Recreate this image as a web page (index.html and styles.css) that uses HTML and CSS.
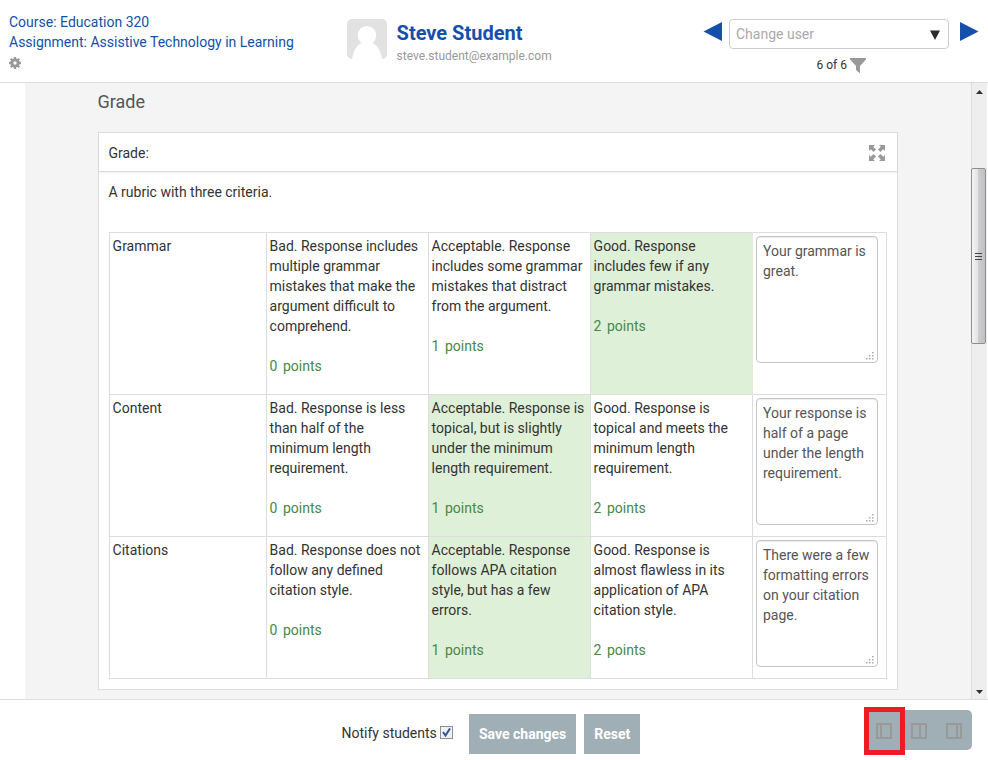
FILE: index.html
```html
<!DOCTYPE html>
<html lang="en">
<head>
<meta charset="utf-8">
<title>Education 320: Grading</title>
<link rel="stylesheet" href="styles.css">
</head>
<body>
<header class="topbar">
  <div class="course">
    <a>Course: Education 320</a>
    <a>Assignment: Assistive Technology in Learning</a>
    <svg class="gear" width="12" height="12" viewBox="0 0 12 12"><g fill="#999"><circle cx="6" cy="6" r="4.600"/><path d="M4.800 0h2.400v12H4.800zM0 4.800h12v2.400H0z"/><path d="M4.800 0h2.400v12H4.800zM0 4.800h12v2.400H0z" transform="rotate(45 6 6)"/></g><circle cx="6" cy="6" r="1.700" fill="#fff"/></svg>
  </div>
  <div class="student">
    <svg class="avatar" width="40" height="40" viewBox="0 0 40 40"><rect width="40" height="40" rx="5" fill="#e2e2e2"/><ellipse cx="20" cy="16.5" rx="9.2" ry="9.5" fill="#fff"/><path d="M5 40C6.500 30 11 25 15.500 24H24.500C29 25 33.500 30 35 40Z" fill="#fff"/></svg>
    <div>
      <h1 class="name">Steve Student</h1>
      <p class="email">steve.student@example.com</p>
    </div>
  </div>
  <nav class="picker">
    <div class="picker-row">
      <svg width="19" height="19" viewBox="0 0 19 19"><path d="M0.500 9.500L19 0V19Z" fill="#1450ab"/></svg>
      <div class="combo"><span>Change user</span><svg width="10" height="10" viewBox="0 0 10 10"><path d="M0 0.500H10L5 10Z" fill="#2b2b2b"/></svg></div>
      <svg width="19" height="19" viewBox="0 0 19 19"><path d="M18.500 9.500L0 0V19Z" fill="#1450ab"/></svg>
    </div>
    <div class="count"><span>6 of 6</span><svg width="16" height="16" viewBox="0 0 16 16"><path d="M0 0H16V1.500L10 8V15.500L6 12V8L0 1.500Z" fill="#999"/></svg></div>
  </nav>
</header>

<main class="body">
  <section class="pane">
    <h2 class="heading">Grade</h2>
    <div class="panel">
      <div class="panel-head"><span>Grade:</span>
        <svg width="16" height="16" viewBox="0 0 16 16" fill="#999"><g id="arrow"><path d="M0 0H6L4.200 1.800L7 4.600L4.600 7L1.800 4.200L0 6Z"/></g><use href="#arrow" transform="matrix(-1 0 0 1 16 0)"/><use href="#arrow" transform="matrix(1 0 0 -1 0 16)"/><use href="#arrow" transform="matrix(-1 0 0 -1 16 16)"/></svg>
      </div>
      <p class="intro">A rubric with three criteria.</p>
      <div class="rubric">
        <div class="row row-tall">
          <div class="cell">Grammar</div>
          <div class="cell">Bad. Response includes multiple grammar mistakes that make the argument difficult to comprehend.<p class="points">0 points</p></div>
          <div class="cell">Acceptable. Response includes some grammar mistakes that distract from the argument.<p class="points">1 points</p></div>
          <div class="cell checked">Good. Response includes few if any grammar mistakes.<p class="points">2 points</p></div>
          <div class="cell remark after-checked"><div class="note"><span>Your grammar is great.</span><svg class="grip" width="8" height="8" viewBox="0 0 8 8"><path d="M6 0h1.500v1.500H6zM3 3h1.500v1.500H3zM6 3h1.500v1.500H6zM0 6h1.500v1.500H0zM3 6h1.500v1.500H3zM6 6h1.500v1.500H6z"/></svg></div></div>
        </div>
        <div class="row">
          <div class="cell">Content</div>
          <div class="cell">Bad. Response is less than half of the minimum length requirement.<p class="points">0 points</p></div>
          <div class="cell checked">Acceptable. Response is topical, but is slightly under the minimum length requirement.<p class="points">1 points</p></div>
          <div class="cell">Good. Response is topical and meets the minimum length requirement.<p class="points">2 points</p></div>
          <div class="cell remark"><div class="note"><span>Your response is half of a page under the length requirement.</span><svg class="grip" width="8" height="8" viewBox="0 0 8 8"><path d="M6 0h1.500v1.500H6zM3 3h1.500v1.500H3zM6 3h1.500v1.500H6zM0 6h1.500v1.500H0zM3 6h1.500v1.500H3zM6 6h1.500v1.500H6z"/></svg></div></div>
        </div>
        <div class="row">
          <div class="cell">Citations</div>
          <div class="cell">Bad. Response does not follow any defined citation style.<p class="points">0 points</p></div>
          <div class="cell checked">Acceptable. Response follows APA citation style, but has a few errors.<p class="points">1 points</p></div>
          <div class="cell">Good. Response is almost flawless in its application of APA citation style.<p class="points">2 points</p></div>
          <div class="cell remark"><div class="note"><span>There were a few formatting errors on your citation page.</span><svg class="grip" width="8" height="8" viewBox="0 0 8 8"><path d="M6 0h1.500v1.500H6zM3 3h1.500v1.500H3zM6 3h1.500v1.500H6zM0 6h1.500v1.500H0zM3 6h1.500v1.500H3zM6 6h1.500v1.500H6z"/></svg></div></div>
        </div>
      </div>
    </div>
  </section>
  <div class="scrollbar">
    <svg class="up" width="7" height="4" viewBox="0 0 7 4"><path d="M0 4L3.500 0L7 4Z" fill="#333"/></svg>
    <div class="thumb"><i></i><i></i><i></i></div>
    <svg class="down" width="7" height="4" viewBox="0 0 7 4"><path d="M0 0H7L3.500 4Z" fill="#333"/></svg>
  </div>
</main>

<footer class="actions">
  <div class="save">
    <span class="notify">Notify students</span>
    <span class="check"><svg width="9" height="9" viewBox="0 0 9 9"><path d="M1 4L3.500 7.500L8 0.500" fill="none" stroke="#3d4f97" stroke-width="2"/></svg></span>
    <button class="btn">Save changes</button>
    <button class="btn">Reset</button>
  </div>
  <div class="layouts">
    <div class="layout current"><svg width="16" height="16" viewBox="0 0 16 16"><path d="M1 1H15V15H1ZM5 1V15"/></svg></div>
    <div class="layout"><svg width="16" height="16" viewBox="0 0 16 16"><path d="M1 1H15V15H1ZM9 1V15"/></svg></div>
    <div class="layout"><svg width="16" height="16" viewBox="0 0 16 16"><path d="M1 1H15V15H1ZM11 1V15"/></svg></div>
  </div>
</footer>
</body>
</html>
```
FILE: styles.css
```css
* { box-sizing: border-box; }
body {
  margin: 0;
  width: 988px;
  height: 760px;
  overflow: hidden;
  display: flex;
  flex-direction: column;
  background: #fff;
  color: #333;
  font: 14px/20px Roboto, "Liberation Sans", sans-serif;
}
h1, h2, p { margin: 0; }
svg { display: block; flex: none; }

.topbar {
  height: 83px;
  border-bottom: 1px solid #ddd;
  display: flex;
  flex: none;
}
.course {
  width: 347px;
  padding: 12px 0 0 9px;
  display: flex;
  flex-direction: column;
  color: #1450ab;
}
.gear { margin-top: 5px; }
.student { width: 356px; padding-top: 19px; display: flex; gap: 9.6px; }
.name { color: #1450ab; font-size: 20px; line-height: 28px; font-weight: 700; }
.email { color: #999; font-size: 12px; line-height: 18px; }
.picker { width: 276px; padding-top: 19px; }
.picker-row { display: flex; gap: 7px; }
.picker-row > svg { margin-top: 3px; }
.combo {
  width: 220px;
  height: 30px;
  margin-right: 4px;
  padding: 0 8px 0 6px;
  border: 1px solid #ccc;
  border-radius: 4px;
  display: flex;
  align-items: center;
  justify-content: space-between;
  color: #aaa;
}
.combo svg { margin-top: 2px; }
.count { display: flex; padding: 6px 0 0 113.5px; gap: 3.5px; font-size: 12px; }
.count svg { margin-top: 3px; }

.body { height: 616px; display: flex; flex: none; }
.pane {
  width: 946px;
  margin-left: 25px;
  padding: 9px 0 0 73px;
  background: #f4f4f4;
}
.heading { margin-left: -.5px; font-size: 18px; line-height: 20px; font-weight: 400; color: #555; }
.panel {
  width: 800px;
  height: 558px;
  margin-top: 20px;
  border: 1px solid #ddd;
  background: #fff;
}
.panel-head {
  height: 39px;
  padding: 2px 12px 0 9.5px;
  border-bottom: 1px solid #ddd;
  box-shadow: 0 1px 2px rgba(0, 0, 0, .06);
  display: flex;
  align-items: center;
  justify-content: space-between;
}
.intro { padding: 10px 0 0 9.5px; }
.rubric { width: 778px; margin: 30px 0 0 10px; border: solid #ddd; border-width: 0 1px 1px 0; }
.row { height: 142px; display: grid; grid-template-columns: 157px 162px 162px 162px 134px; }
.row-tall { height: 162px; }
.cell { border: solid #ddd; border-width: 1px 0 0 1px; padding: 3px 4px 0 2.6px; }
.cell.remark { padding-left: 3px; }
.cell.checked { background: #dff0d8; }
.cell.after-checked { border-left-color: #dff0d8; }
.points { margin-top: 20px; color: #468847; word-spacing: 2px; }
.note {
  position: relative;
  width: 122px;
  height: 127px;
  padding: 4px 4px 0 6px;
  border: 1px solid #c4c4c4;
  border-radius: 4px;
  box-shadow: inset 0 1px 1px rgba(0, 0, 0, .075);
  color: #555;
}
.grip { position: absolute; right: 3px; bottom: 2px; fill: #aaa; }

.scrollbar {
  width: 16px;
  padding: 7px 0 5px;
  border-left: 1px solid #ddd;
  background: #eee;
  display: flex;
  flex-direction: column;
  align-items: center;
}
.thumb {
  width: 15px;
  height: 176px;
  margin: 74px 0 auto -2px;
  border: 1px solid #8e8e8e;
  border-radius: 2px;
  background: linear-gradient(90deg, #f5f5f5, #e2e2e4 45%, #cdcdd0 50%, #c0c0c4);
  display: flex;
  flex-direction: column;
  align-items: center;
  justify-content: center;
  gap: 2px;
}
.thumb i { width: 7px; height: 1px; background: #444; }

.actions { height: 61px; border-top: 1px solid #ddd; display: flex; flex: none; }
.save { width: 864px; padding: 14px 0 0 341.5px; display: flex; }
.notify { width: 98.5px; padding-top: 9px; }
.check {
  width: 13px;
  height: 13px;
  margin: 12px 16px 0 0;
  border: 1px solid #8e8f8f;
  background: #edf0f4;
  display: flex;
  align-items: center;
  justify-content: center;
}
.btn {
  height: 40px;
  margin: 0 8px 0 0;
  padding: 0 10px;
  border: 0;
  background: #a0aeb5;
  color: #fff;
  font: 700 14px/20px Roboto, sans-serif;
  white-space: nowrap;
}
.layouts {
  width: 108px;
  height: 48px;
  margin-top: 7px;
  display: flex;
}
.layout { width: 35px; height: 40px; margin-top: 3px; padding: 13px 0 0 6px; background: #a0aeb5; }
.layout:last-child { width: 32px; border-radius: 0 5px 5px 0; }
.layout svg { fill: none; stroke: #999; stroke-width: 2; }
.layout.current { width: 41px; height: 48px; margin-top: 0; padding: 11px 0 0 7px; border: 5px solid #ed1c24; }
```
